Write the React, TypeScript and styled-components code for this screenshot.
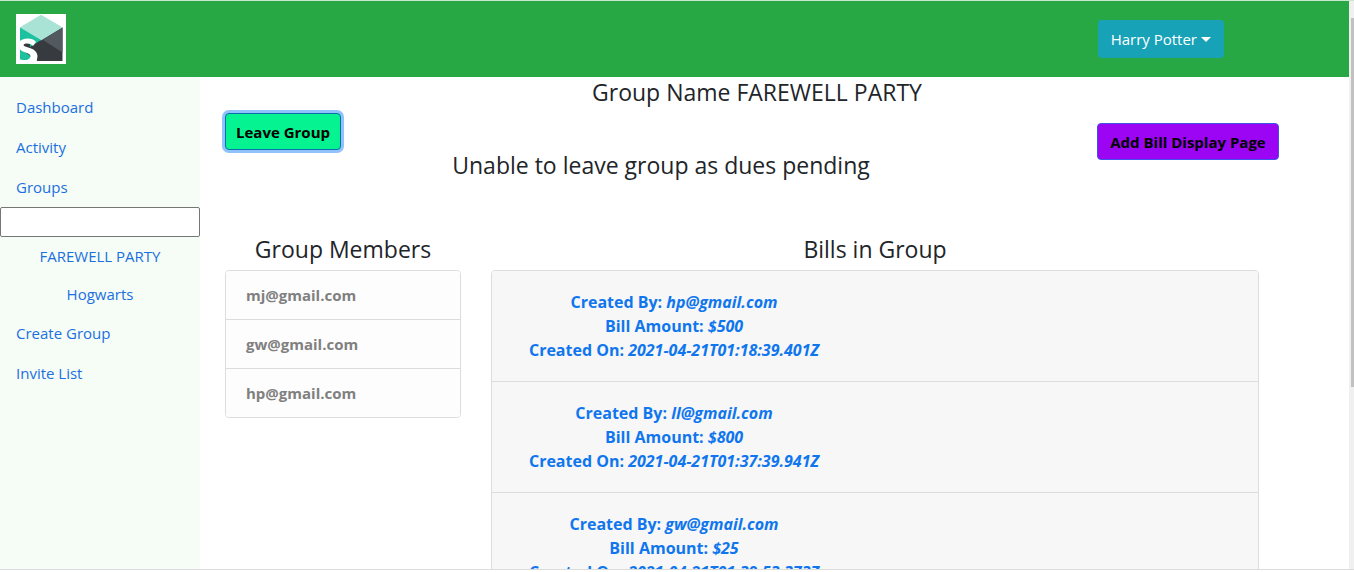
import React from "react";
import styled, { createGlobalStyle } from "styled-components";

const GlobalStyle = createGlobalStyle`
  *, *::before, *::after { box-sizing: border-box; }
  body {
    margin: 0;
    background: #fff;
    color: #212529;
    font-family: "Segoe UI", "Open Sans", "Noto Sans", sans-serif;
    font-size: 15px;
    line-height: 24px;
  }
  h1, h2, p, ul { margin: 0; padding: 0; }
  ul { list-style: none; }
  button, input { font: inherit; }
`;

const Frame = styled.div`
  display: grid;
  grid-template-columns: minmax(0, 1fr) 5px;
  height: calc(100vh - 2px);
  overflow: hidden;
  border-top: 1px solid #c9e9cf;
  border-bottom: 1px solid #dcdcdc;
`;

const Page = styled.div`
  display: flex;
  flex-direction: column;
  min-height: 0;
  overflow: hidden;
`;

const ScrollTrack = styled.div`
  padding: 17px 0 0 2px;
  background: #f0f0f0;
`;

const ScrollThumb = styled.div`
  height: 67%;
  background: #c1c1c1;
`;

const Header = styled.header`
  display: flex;
  align-items: center;
  justify-content: space-between;
  flex: none;
  padding: 13px 125px 13px 16px;
  background: #28a745;
`;

const Logo = styled.svg`
  display: block;
  width: 50px;
  height: 50px;
`;

const UserButton = styled.button`
  display: flex;
  align-items: center;
  gap: 4px;
  height: 38px;
  padding: 0 13px;
  border: 0;
  border-radius: 4px;
  background: #17a2b8;
  color: #fff;
`;

const Caret = styled.span`
  border: 5px solid transparent;
  border-top-color: #fff;
  border-bottom: 0;
`;

const Body = styled.div`
  display: flex;
  flex: 1;
  min-height: 0;
`;

const Sidebar = styled.nav`
  flex: none;
  width: 200px;
  padding-top: 10px;
  background: #f5fdf6;
`;

const NavLink = styled.a<{ $nested?: boolean }>`
  display: block;
  padding: ${(p) => (p.$nested ? "7px 16px" : "8px 16px")};
  color: #1b6fe0;
  text-align: ${(p) => (p.$nested ? "center" : "left")};
  text-decoration: none;
`;

const GroupSearch = styled.input`
  display: block;
  width: 100%;
  height: 30px;
  border: 1px solid #767676;
  border-radius: 2px;
  background: #fff;
`;

const Main = styled.main`
  flex: 1;
  min-width: 0;
  padding: 0 70px 0 25px;
`;

const Title = styled.h1`
  padding-left: 10px;
  font-size: 23px;
  line-height: 30px;
  font-weight: 500;
  text-align: center;
`;

const Heading = styled.h2`
  font-size: 23px;
  line-height: 30px;
  font-weight: 500;
  text-align: center;
`;

const Toolbar = styled.div`
  display: flex;
  align-items: flex-start;
  padding-top: 6px;
`;

const LeaveArea = styled.div`
  flex: 1;
`;

const ActionButton = styled.button<{ $tone: string; $active?: boolean; $lowered?: boolean }>`
  display: block;
  height: 37px;
  min-width: ${(p) => (p.$lowered ? "182px" : "0")};
  margin-top: ${(p) => (p.$lowered ? "10px" : "0")};
  padding: 0 10px;
  border: 1px solid ${(p) => (p.$active ? "#0b6fae" : "#3f51e8")};
  border-radius: 4px;
  background: ${(p) => p.$tone};
  box-shadow: ${(p) => (p.$active ? "0 0 0 3px #90c2fb" : "none")};
  color: #000;
  font-weight: 700;
`;

const Columns = styled.div`
  display: grid;
  grid-template-columns: 25% 75%;
  margin: 54px 5px 0 -15px;
`;

const Column = styled.section`
  padding: 0 15px;
`;

const List = styled.ul`
  margin-top: 6px;
  overflow: hidden;
  border: 1px solid #dcdcdc;
  border-radius: 4px;
`;

const Member = styled.li`
  padding: 12px 20px;
  background: #fdfdfd;
  color: #808080;
  font-weight: 700;
  & + & { border-top: 1px solid #dcdcdc; }
`;

const Bill = styled.li`
  padding: 19px 20px;
  background: #f7f7f7;
  & + & { border-top: 1px solid #dcdcdc; }
`;

const BillLink = styled.a`
  display: block;
  width: 324px;
  max-width: 100%;
  color: #0f76ee;
  font-size: 16px;
  font-weight: 700;
  text-align: center;
  text-decoration: none;
`;

const members = ["mj@gmail.com", "gw@gmail.com", "hp@gmail.com"];

const bills = [
  { by: "hp@gmail.com", amount: "$500", on: "2021-04-21T01:18:39.401Z" },
  { by: "ll@gmail.com", amount: "$800", on: "2021-04-21T01:37:39.941Z" },
  { by: "gw@gmail.com", amount: "$25", on: "2021-04-21T01:39:53.373Z" },
];

export default function App() {
  return (
    <>
      <GlobalStyle />
      <Frame>
        <Page>
          <Header>
            <Logo viewBox="0 0 50 50" role="img" aria-label="Splitwise">
              <rect width="50" height="50" fill="#fff" />
              <path d="M4 13.5L25 26V47H4Z" fill="#1cc29f" />
              <path d="M25 1L46.5 13.5L25 27L4 13.5Z" fill="#a9e3d5" />
              <path d="M46.5 13.5V47H19L7 36V29H15Z" fill="#373b3f" />
              <path d="M25 1L46.5 13.5L25 26.500L4 13.5Z" fill="#a9e3d5" />
              <path d="M46.5 13.5V38.500L27 26Z" fill="#52595f" />
              <path d="M4 13.5L25 26L14 33V29L4 29Z" fill="#1cc29f" />
              <path d="M3 28C6 24 16 23 20 28L17 32C14 29 9 29 7.500 31C8 34 21 33 21.500 42L20.500 49H3V45C7 47 14 46 14.500 42C14 38 4 39 3 33Z" fill="#fff" />
              <path d="M5 39C9 39.500 14 40 14 42.500C14 46 8 47 5 44.500Z" fill="#1cc29f" />
            </Logo>
            <UserButton type="button" aria-haspopup="menu">
              Harry Potter
              <Caret />
            </UserButton>
          </Header>
          <Body>
            <Sidebar>
              <NavLink href="#dashboard">Dashboard</NavLink>
              <NavLink href="#activity">Activity</NavLink>
              <NavLink href="#groups">Groups</NavLink>
              <GroupSearch type="text" aria-label="Search groups" />
              <NavLink $nested href="#farewell-party">FAREWELL PARTY</NavLink>
              <NavLink $nested href="#hogwarts">Hogwarts</NavLink>
              <NavLink href="#create-group">Create Group</NavLink>
              <NavLink href="#invite-list">Invite List</NavLink>
            </Sidebar>
            <Main>
              <Title>Group Name FAREWELL PARTY</Title>
              <Toolbar>
                <LeaveArea>
                  <ActionButton type="button" $tone="#05f391" $active>Leave Group</ActionButton>
                  <Heading>Unable to leave group as dues pending</Heading>
                </LeaveArea>
                <ActionButton type="button" $tone="#9c05f3" $lowered>Add Bill Display Page</ActionButton>
              </Toolbar>
              <Columns>
                <Column>
                  <Heading>Group Members</Heading>
                  <List>
                    {members.map((m) => (
                      <Member key={m}>{m}</Member>
                    ))}
                  </List>
                </Column>
                <Column>
                  <Heading>Bills in Group</Heading>
                  <List>
                    {bills.map((b) => (
                      <Bill key={b.on}>
                        <BillLink href="#bill">
                          <p>Created By: <em>{b.by}</em></p>
                          <p>Bill Amount: <em>{b.amount}</em></p>
                          <p>Created On: <em>{b.on}</em></p>
                        </BillLink>
                      </Bill>
                    ))}
                  </List>
                </Column>
              </Columns>
            </Main>
          </Body>
        </Page>
        <ScrollTrack>
          <ScrollThumb />
        </ScrollTrack>
      </Frame>
    </>
  );
}
